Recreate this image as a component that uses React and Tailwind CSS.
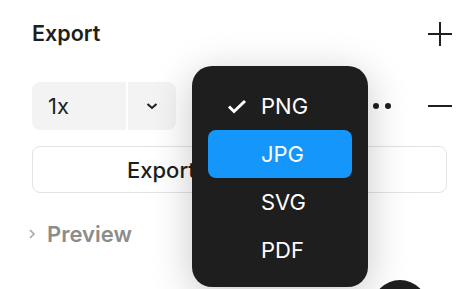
export default function App() {
  const formats = ["PNG", "JPG", "SVG", "PDF"];

  return (
    <div className="relative w-[464px] h-[289px] overflow-hidden bg-white font-['Inter',sans-serif] text-[#1e1e1e]">
      {/* Panel */}
      <div className="flex flex-col pl-[32px] pr-[12px] pt-[22px]">
        {/* Header */}
        <div className="flex items-center justify-between h-6">
          <span className="text-[21.5px] font-semibold leading-none">Export</span>
          <svg width="24" height="24" viewBox="0 0 24 24" className="text-[#1e1e1e]">
            <path d="M12 0v24M0 12h24" stroke="currentColor" strokeWidth="2" />
          </svg>
        </div>

        {/* Scale row */}
        <div className="flex items-center mt-[36px] h-12">
          <div className="flex h-12 w-[144px] rounded-[8px] bg-[#f3f3f3] overflow-hidden">
            <div className="flex items-center w-[94px] pl-[16px] text-[22px] leading-none">1x</div>
            <div className="w-[2px] bg-white" />
            <div className="flex flex-1 items-center justify-center">
              <svg width="12" height="8" viewBox="0 0 12 8">
                <path d="M1.5 2l4.5 4 4.5-4" fill="none" stroke="#1e1e1e" strokeWidth="2" />
              </svg>
            </div>
          </div>
          <div className="flex items-center gap-[6px] ml-auto">
            <span className="w-[6px] h-[6px] rounded-full bg-[#1e1e1e]" />
            <span className="w-[6px] h-[6px] rounded-full bg-[#1e1e1e]" />
            <span className="w-[6px] h-[6px] rounded-full bg-[#1e1e1e]" />
          </div>
          <svg width="24" height="24" viewBox="0 0 24 24" className="ml-[37px]">
            <path d="M0 12h24" stroke="#1e1e1e" strokeWidth="2" />
          </svg>
        </div>

        {/* Export button */}
        <div className="flex items-center mt-4 mr-[5px] h-[47px] rounded-[8px] border-[1.5px] border-[#e3e3e3] pl-[94px] text-[22px] font-medium leading-none">
          Export
        </div>

        {/* Preview */}
        <div className="flex items-center mt-[29px] -ml-[4px] gap-[11px] h-6">
          <svg width="8" height="12" viewBox="0 0 8 12">
            <path d="M2 2l4 4-4 4" fill="none" stroke="#a6a6a6" strokeWidth="1.6" />
          </svg>
          <span className="text-[22px] font-semibold leading-none text-[#8c8c8c]">Preview</span>
        </div>
      </div>

      {/* Format dropdown */}
      <div className="absolute left-[192px] top-[66px] w-[176px] h-[221px] rounded-[20px] bg-[#1e1e1e] px-4 pt-4 shadow-[0_8px_40px_rgba(0,0,0,0.22)]">
        {formats.map((f) => (
          <div
            key={f}
            className={`flex items-center h-12 rounded-[8px] text-[22px] leading-none text-white ${f === "JPG" ? "bg-[#1596fb]" : ""}`}
          >
            <div className="w-[53px] flex justify-center pl-[4px]">
              {f === "PNG" && (
                <svg width="20" height="15" viewBox="0 0 20 15">
                  <path d="M2 7.5l5 5L18 2" fill="none" stroke="white" strokeWidth="3" />
                </svg>
              )}
            </div>
            <span>{f}</span>
          </div>
        ))}
      </div>

      {/* Floating button peeking in */}
      <div className="absolute left-[372px] top-[280px] w-[56px] h-[56px] rounded-full bg-[#1e1e1e]" />
    </div>
  );
}
